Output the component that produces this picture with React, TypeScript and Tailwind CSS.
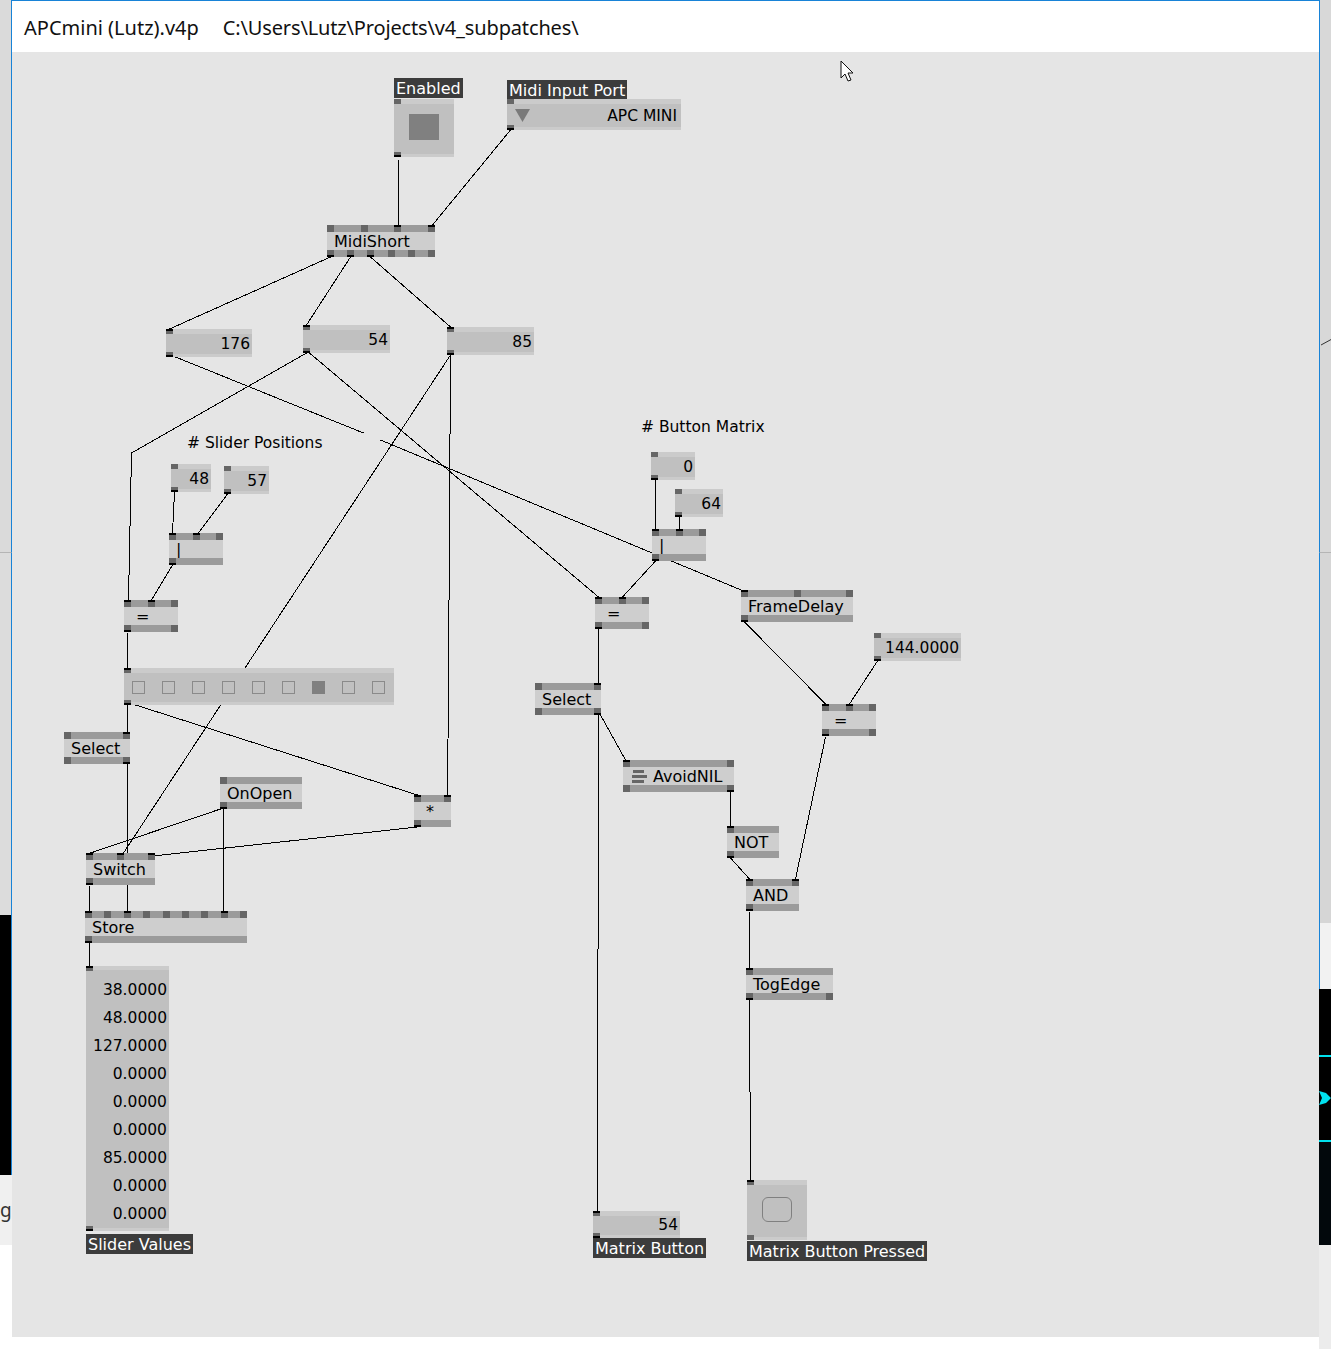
import clsx from "clsx";

// canvas origin in page coordinates
const OX = 12;
const OY = 52;

type NodeDef = {
  label: string;
  x: number;
  y: number;
  w: number;
  ins: number;
  outs: number;
  inOn?: number[];
  outOn?: number[];
  pad?: number;
  icon?: boolean;
};

const nodes: NodeDef[] = [
  { label: "MidiShort", x: 327, y: 225, w: 108, ins: 4, outs: 6, inOn: [2, 3], outOn: [0, 1, 2] },
  { label: "|", x: 169, y: 533, w: 54, ins: 3, outs: 1, inOn: [0, 1], outOn: [0] },
  { label: "=", x: 124, y: 600, w: 54, ins: 3, outs: 2, inOn: [0, 1], outOn: [0], pad: 12 },
  { label: "Select", x: 64, y: 732, w: 66, ins: 2, outs: 2, inOn: [1], outOn: [1] },
  { label: "OnOpen", x: 220, y: 777, w: 82, ins: 1, outs: 1, outOn: [0] },
  { label: "*", x: 414, y: 795, w: 37, ins: 2, outs: 1, inOn: [0, 1], outOn: [0], pad: 12 },
  { label: "Switch", x: 86, y: 853, w: 69, ins: 3, outs: 1, inOn: [0, 1, 2], outOn: [0] },
  { label: "Store", x: 85, y: 911, w: 162, ins: 9, outs: 1, inOn: [0, 2, 7], outOn: [0] },
  { label: "|", x: 652, y: 529, w: 54, ins: 3, outs: 1, inOn: [0, 1], outOn: [0] },
  { label: "=", x: 595, y: 597, w: 54, ins: 3, outs: 2, inOn: [0, 1], outOn: [0], pad: 12 },
  { label: "FrameDelay", x: 741, y: 590, w: 112, ins: 3, outs: 1, inOn: [0], outOn: [0] },
  { label: "Select", x: 535, y: 683, w: 66, ins: 2, outs: 2, inOn: [1], outOn: [1] },
  { label: "=", x: 822, y: 704, w: 54, ins: 3, outs: 2, inOn: [0, 1], outOn: [0], pad: 12 },
  { label: "AvoidNIL", x: 623, y: 760, w: 111, ins: 2, outs: 2, inOn: [0], outOn: [1], icon: true },
  { label: "NOT", x: 727, y: 826, w: 52, ins: 1, outs: 1, inOn: [0], outOn: [0] },
  { label: "AND", x: 746, y: 879, w: 53, ins: 2, outs: 1, inOn: [0, 1], outOn: [0] },
  { label: "TogEdge", x: 746, y: 968, w: 87, ins: 1, outs: 2, inOn: [0], outOn: [0] },
];

const numbers = [
  { text: "176", x: 166, y: 329, w: 86, inOn: true },
  { text: "54", x: 303, y: 325, w: 87, inOn: true },
  { text: "85", x: 447, y: 327, w: 87, inOn: true },
  { text: "48", x: 171, y: 464, w: 40 },
  { text: "57", x: 224, y: 466, w: 45 },
  { text: "0", x: 651, y: 452, w: 44 },
  { text: "64", x: 675, y: 489, w: 48 },
  { text: "144.0000", x: 874, y: 633, w: 87 },
];

const sliderValues = ["38.0000", "48.0000", "127.0000", "0.0000", "0.0000", "0.0000", "85.0000", "0.0000", "0.0000"];

const wires: number[][] = [
  [398, 160, 398, 225],
  [510, 130, 432, 225],
  [330, 257, 169, 329],
  [350, 257, 306, 325],
  [370, 257, 450, 327],
  [175, 357, 363, 433],
  [380, 440, 743, 591],
  [306, 353, 131, 453],
  [131, 453, 128, 600],
  [309, 353, 598, 597],
  [450, 355, 448, 685],
  [448, 685, 447, 795],
  [450, 355, 123, 853],
  [174, 492, 172, 533],
  [227, 494, 198, 533],
  [172, 565, 151, 600],
  [127, 633, 127, 668],
  [127, 705, 127, 732],
  [135, 705, 417, 795],
  [127, 764, 127, 911],
  [223, 808, 90, 853],
  [223, 808, 223, 911],
  [417, 827, 152, 856],
  [89, 886, 89, 911],
  [89, 943, 89, 966],
  [655, 480, 655, 529],
  [679, 517, 679, 529],
  [655, 561, 622, 597],
  [598, 629, 598, 683],
  [598, 715, 597, 1211],
  [600, 715, 625, 760],
  [730, 792, 730, 826],
  [730, 858, 749, 879],
  [825, 737, 795, 879],
  [744, 622, 825, 704],
  [877, 661, 849, 704],
  [749, 912, 749, 968],
  [749, 1000, 750, 1180],
];

const vfont = "font-['DejaVu_Sans',sans-serif]";

function pinLeft(i: number, n: number, w: number) {
  return n > 1 ? Math.round((i * (w - 7)) / (n - 1)) : 0;
}

function Pin({ left, on, bottom, h = 7 }: { left: number; on?: boolean; bottom?: boolean; h?: number }) {
  return (
    <div
      className={clsx(
        "absolute w-[7px] bg-[#666666]",
        bottom ? "bottom-0" : "top-0",
        on && (bottom ? "border-b-2 border-black" : "border-t-2 border-black")
      )}
      style={{ left, height: h }}
    />
  );
}

function Node({ n }: { n: NodeDef }) {
  return (
    <div className="absolute flex flex-col h-[32px]" style={{ left: n.x - OX, top: n.y - OY, width: n.w }}>
      <div className="h-[7px] bg-[#9b9b9b]" />
      <div className="flex-1 flex items-center gap-[6px] pt-[1px] bg-[#cecece] text-[16px] leading-none text-black" style={{ paddingLeft: n.pad ?? 7 }}>
        {n.icon && (
          <div className="flex flex-col gap-[2px] pl-[2px]">
            <div className="w-[11px] h-[3px] bg-[#666666] ml-[1px]" />
            <div className="w-[15px] h-[3px] bg-[#666666]" />
            <div className="w-[12px] h-[3px] bg-[#666666]" />
          </div>
        )}
        <span>{n.label}</span>
      </div>
      <div className="h-[7px] bg-[#9b9b9b]" />
      {Array.from({ length: n.ins }, (_, i) => (
        <Pin key={"i" + i} left={pinLeft(i, n.ins, n.w)} on={n.inOn?.includes(i)} />
      ))}
      {Array.from({ length: n.outs }, (_, i) => (
        <Pin key={"o" + i} left={pinLeft(i, n.outs, n.w)} on={n.outOn?.includes(i)} bottom />
      ))}
    </div>
  );
}

function IOFrame({
  x, y, w, h, inOn, outOn = true, children,
}: { x: number; y: number; w: number; h: number; inOn?: boolean; outOn?: boolean; children: React.ReactNode }) {
  return (
    <div className="absolute flex flex-col" style={{ left: x - OX, top: y - OY, width: w, height: h }}>
      <div className="h-[5px] bg-[#cbcbcb]" />
      <div className="flex-1 bg-[#c0c0c0] flex">{children}</div>
      <div className="h-[3px] bg-[#cbcbcb]" />
      <Pin left={0} on={inOn} h={5} />
      <Pin left={0} on={outOn} h={5} bottom />
    </div>
  );
}

function Label({ x, y, text }: { x: number; y: number; text: string }) {
  return (
    <div
      className="absolute h-[20px] px-[2px] pt-[1px] bg-[#3c3c3c] text-white text-[16px] leading-[20px] whitespace-nowrap"
      style={{ left: x - OX, top: y - OY }}
    >
      {text}
    </div>
  );
}

function Comment({ x, y, text }: { x: number; y: number; text: string }) {
  return (
    <div className="absolute text-[15.5px] leading-[18px] text-black whitespace-nowrap" style={{ left: x - OX, top: y - OY }}>
      {text}
    </div>
  );
}

function Canvas() {
  return (
    <div className={clsx("relative flex-1 bg-[#e5e5e5] overflow-hidden", vfont)}>
      <svg className="absolute inset-0" width={1307} height={1285} viewBox="12 52 1307 1285" shapeRendering="crispEdges">
        {wires.map(([x1, y1, x2, y2], i) => (
          <line key={i} x1={x1 + 0.5} y1={y1} x2={x2 + 0.5} y2={y2} stroke="#000" strokeWidth={1} />
        ))}
      </svg>

      <Label x={394} y={78} text="Enabled" />
      <IOFrame x={394} y={99} w={60} h={58}>
        <div className="flex-1 flex items-start justify-center pt-[10px]">
          <div className="w-[30px] h-[26px] bg-[#808080]" />
        </div>
      </IOFrame>

      <Label x={507} y={80} text="Midi Input Port" />
      <IOFrame x={507} y={99} w={174} h={31}>
        <div className="flex-1 flex items-center justify-between pl-[8px] pr-[4px] pt-[3px]">
          <svg width="15" height="13" viewBox="0 0 15 13" className="-mt-[3px]">
            <polygon points="0,0 15,0 7.5,13" fill="#7a7a7a" />
          </svg>
          <span className="text-[15.5px] leading-none text-black">APC MINI</span>
        </div>
      </IOFrame>

      {numbers.map((b) => (
        <IOFrame key={b.text + b.x} x={b.x} y={b.y} w={b.w} h={28} inOn={b.inOn}>
          <div className="flex-1 flex items-center justify-end pr-[2px] pt-[1px] text-[15.5px] leading-none text-black">{b.text}</div>
        </IOFrame>
      ))}

      <Comment x={187} y={434} text="# Slider Positions" />
      <Comment x={641} y={418} text="# Button Matrix" />

      <IOFrame x={124} y={668} w={270} h={37} inOn>
        <div className="flex-1 flex items-center gap-[17px] pl-[8px]">
          {Array.from({ length: 9 }, (_, i) => (
            <div
              key={i}
              className={clsx("w-[13px] h-[13px] border border-[#8a8a8a]", i === 6 && "bg-[#808080] border-[#808080]")}
            />
          ))}
        </div>
      </IOFrame>

      <IOFrame x={86} y={966} w={83} h={265} inOn>
        <div className="flex-1 flex flex-col pt-[6px] pr-[2px] text-[15.5px] text-black">
          {sliderValues.map((v, i) => (
            <div key={i} className="h-[28px] flex items-center justify-end leading-none">{v}</div>
          ))}
        </div>
      </IOFrame>
      <Label x={86} y={1234} text="Slider Values" />

      <IOFrame x={593} y={1211} w={87} h={27} inOn>
        <div className="flex-1 flex items-center justify-end pr-[2px] pt-[1px] text-[15.5px] leading-none text-black">54</div>
      </IOFrame>
      <Label x={593} y={1238} text="Matrix Button" />

      <IOFrame x={747} y={1180} w={60} h={60} inOn outOn={false}>
        <div className="flex-1 flex items-start justify-center pt-[12px]">
          <div className="w-[30px] h-[25px] rounded-[6px] border border-[#808080]" />
        </div>
      </IOFrame>
      <Label x={747} y={1241} text="Matrix Button Pressed" />

      {nodes.map((n) => (
        <Node key={n.label + n.x} n={n} />
      ))}

      {/* mouse pointer */}
      <svg className="absolute left-[828px] top-[8px]" width="20" height="28" viewBox="0 0 20 28">
        <path d="M1 1 L1 18 L5 14 L8 21 L11 20 L8 13 L13 13 Z" fill="#fff" stroke="#111" strokeWidth="1" />
      </svg>
    </div>
  );
}

export default function App() {
  return (
    <div className="w-[1331px] h-[1349px] bg-white flex overflow-hidden">
      {/* windows behind, left */}
      <div className="w-[12px] flex flex-col">
        <div className="h-[553px] bg-[#dadada] border-r border-[#1883d7] border-b border-b-[#b5b5b5]" />
        <div className="h-[362px] bg-[#dcdcdc] border-r border-[#1883d7]" />
        <div className="h-[260px] bg-black border-r border-[#1883d7]" />
        <div className="h-[70px] bg-[#f0f0f0] flex items-center">
          <span className="text-[19px] leading-none text-[#333] font-['Noto_Sans',sans-serif]">g</span>
        </div>
        <div className="flex-1 bg-white" />
      </div>

      {/* vvvv patch window */}
      <div className="w-[1307px] h-[1337px] flex flex-col">
        <div className="h-[52px] bg-white border-t border-[#1883d7] flex items-center pl-[12px] pt-[3px] text-[20px] text-[#111] font-['Noto_Sans',sans-serif] whitespace-nowrap">
          <span>APCmini (Lutz).v4p</span>
          <span className="ml-[24px] tracking-[-0.15px]">C:\Users\Lutz\Projects\v4_subpatches\</span>
        </div>
        <Canvas />
      </div>

      {/* windows behind, right */}
      <div className="w-[12px] flex flex-col">
        <div className="h-[553px] bg-[#d8d8d8] border-l border-[#1883d7] border-b border-b-[#b5b5b5] relative">
          <svg className="absolute left-0 top-[336px]" width="12" height="10" viewBox="0 0 12 10">
            <line x1="1" y1="9" x2="12" y2="3" stroke="#333" strokeWidth="1" />
          </svg>
        </div>
        <div className="h-[370px] bg-[#d6d6d6] border-l border-[#1883d7]" />
        <div className="h-[66px] bg-[#f2f2f2] border-l border-[#1883d7]" />
        <div className="h-[256px] bg-black flex flex-col">
          <div className="h-[66px]" />
          <div className="h-[2px] bg-[#00e1ee]" />
          <div className="h-[28px]" />
          <div className="h-[25px] flex items-center">
            <svg width="12" height="22" viewBox="0 0 12 22">
              <polygon points="0,4 7,6 12,11 7,16 0,18 3,11" fill="#00e1ee" />
            </svg>
          </div>
          <div className="h-[30px]" />
          <div className="h-[2px] bg-[#00e1ee]" />
          <div className="flex-1 bg-[#02080c]" />
        </div>
        <div className="flex-1 bg-[#ececec]" />
      </div>
    </div>
  );
}
